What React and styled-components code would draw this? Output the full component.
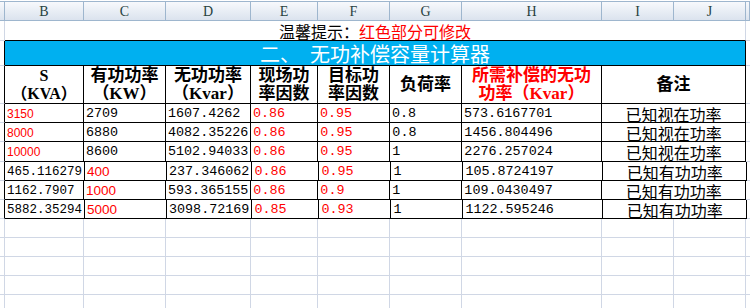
import React from 'react';
import styled, { createGlobalStyle } from 'styled-components';

const GRID = '#d0d7e5';
const INK = '#000';
const RED = '#ff0000';
const CJK = '"Noto Sans CJK SC", "Noto Sans", sans-serif';
const MONO = '"Liberation Mono", "Noto Sans CJK SC", monospace';

const GlobalStyle = createGlobalStyle`
  html, body {
    margin: 0;
    background: #fff;
  }
  body {
    font-family: ${CJK};
    color: #000;
  }
`;

const widths = { gut: 5, B: 79, C: 82, D: 85, E: 67, F: 72, G: 72, H: 140, I: 72, J: 72 };
const letters = ['B', 'C', 'D', 'E', 'F', 'G', 'H', 'I', 'J'];

const Sheet = styled.div`
  width: 750px;
  height: 308px;
  overflow: hidden;
  display: flex;
  flex-direction: column;
`;

const Row = styled.div`
  display: flex;
  flex: none;
  height: ${(p) => p.$h}px;
`;

const HeadBar = styled.div`
  display: flex;
  flex: none;
  height: 21px;
  padding-top: 1px;
  box-sizing: border-box;
  background: #fff;
`;

const HeadCell = styled.div`
  flex: ${(p) => (p.$w ? `0 0 ${p.$w}px` : '1 1 auto')};
  box-sizing: border-box;
  border-top: 1px solid #9eb6ce;
  border-right: 1px solid #9eb6ce;
  border-bottom: 1px solid #9eb6ce;
  background: linear-gradient(#f7f9fc, #dbe3ee);
  display: flex;
  align-items: center;
  justify-content: center;
  font-family: "Liberation Serif", serif;
  font-size: 14px;
  line-height: 16px;
  color: #27413e;
  padding-top: 1px;
`;

const Cell = styled.div`
  flex: ${(p) => (p.$w ? `0 0 ${p.$w}px` : '1 1 auto')};
  box-sizing: border-box;
  white-space: nowrap;
  border-right: 1px solid ${(p) => p.$right || GRID};
  border-bottom: 1px solid ${(p) => p.$bottom || GRID};
  background: ${(p) => p.$bg || 'transparent'};
  display: flex;
  align-items: center;
  justify-content: ${(p) => (p.$center ? 'center' : 'flex-start')};
  padding: 0 ${(p) => (p.$center ? 0 : 2)}px;
  padding-top: 1px;
`;

const Notice = styled.span`
  font-size: 16px;
  line-height: 18px;
  color: ${(p) => (p.$red ? RED : '#000')};
`;

const Title = styled.span`
  font-size: 20px;
  line-height: 22px;
  color: #fff;
`;

const TitleNum = styled.span`
  margin-right: 10px;
`;

const HeadText = styled.div`
  display: flex;
  flex-direction: column;
  align-items: center;
  font-family: "Liberation Serif", ${CJK};
  font-weight: 700;
  font-size: ${(p) => p.$size || 17}px;
  line-height: 18px;
  color: ${(p) => (p.$red ? RED : '#000')};
  padding-bottom: 1px;
`;

const Num = styled.span`
  font-family: ${(p) => (p.$sans ? '"Liberation Sans", sans-serif' : MONO)};
  font-size: ${(p) => p.$size || 13.4}px;
  line-height: 16px;
  color: ${(p) => (p.$red ? RED : '#000')};
`;

const Note = styled.span`
  font-size: 16px;
  line-height: 16px;
`;

const data = [
  { b: '3150', bRed: true, c: '2709', d: '1607.4262', e: '0.86', f: '0.95', g: '0.8', h: '573.6167701', note: '已知视在功率', hgt: 19 },
  { b: '8000', bRed: true, c: '6880', d: '4082.35226', e: '0.86', f: '0.95', g: '0.8', h: '1456.804496', note: '已知视在功率', hgt: 19 },
  { b: '10000', bRed: true, c: '8600', d: '5102.94033', e: '0.86', f: '0.95', g: '1', h: '2276.257024', note: '已知视在功率', hgt: 20 },
  { b: '465.116279', cRed: true, c: '400', d: '237.346062', e: '0.86', f: '0.95', g: '1', h: '105.8724197', note: '已知有功功率', hgt: 19 },
  { b: '1162.7907', cRed: true, c: '1000', d: '593.365155', e: '0.86', f: '0.9', g: '1', h: '109.0430497', note: '已知有功功率', hgt: 19 },
  { b: '5882.35294', cRed: true, c: '5000', d: '3098.72169', e: '0.85', f: '0.93', g: '1', h: '1122.595246', note: '已知有功功率', hgt: 19 },
];

const span = (...keys) => keys.reduce((s, k) => s + widths[k], 0);

const TableCell = (props) => <Cell $right={INK} $bottom={INK} {...props} />;

export default function App() {
  return (
    <>
      <GlobalStyle />
      <Sheet>
        <HeadBar>
          <HeadCell $w={widths.gut} />
          {letters.map((l) => (
            <HeadCell key={l} $w={widths[l]}>
              {l}
            </HeadCell>
          ))}
          <HeadCell />
        </HeadBar>

        <Row $h={20}>
          <Cell $w={widths.gut} />
          <Cell $w={span('B', 'C', 'D', 'E', 'F', 'G', 'H', 'I', 'J')} $bottom={INK} $center>
            <Notice>温馨提示：</Notice>
            <Notice $red>红色部分可修改</Notice>
          </Cell>
          <Cell />
        </Row>

        <Row $h={25}>
          <Cell $w={widths.gut} $right={INK} />
          <TableCell $w={span('B', 'C', 'D', 'E', 'F', 'G', 'H', 'I', 'J')} $bg="#00b0f0" $center>
            <Title>
              <TitleNum>二、</TitleNum>无功补偿容量计算器
            </Title>
          </TableCell>
          <Cell />
        </Row>

        <Row $h={38}>
          <Cell $w={widths.gut} $right={INK} />
          <TableCell $w={widths.B} $center>
            <HeadText $size={16}>
              <span>S</span>
              <span>（KVA）</span>
            </HeadText>
          </TableCell>
          <TableCell $w={widths.C} $center>
            <HeadText>
              <span>有功功率</span>
              <span>（KW）</span>
            </HeadText>
          </TableCell>
          <TableCell $w={widths.D} $center>
            <HeadText>
              <span>无功功率</span>
              <span>（Kvar）</span>
            </HeadText>
          </TableCell>
          <TableCell $w={widths.E} $center>
            <HeadText>
              <span>现场功</span>
              <span>率因数</span>
            </HeadText>
          </TableCell>
          <TableCell $w={widths.F} $center>
            <HeadText>
              <span>目标功</span>
              <span>率因数</span>
            </HeadText>
          </TableCell>
          <TableCell $w={widths.G} $center>
            <HeadText>
              <span>负荷率</span>
            </HeadText>
          </TableCell>
          <TableCell $w={widths.H} $center>
            <HeadText $red>
              <span>所需补偿的无功</span>
              <span>功率（Kvar）</span>
            </HeadText>
          </TableCell>
          <TableCell $w={span('I', 'J')} $center>
            <HeadText>
              <span>备注</span>
            </HeadText>
          </TableCell>
          <Cell />
        </Row>

        {data.map((r) => (
          <Row key={r.b} $h={r.hgt}>
            <Cell $w={widths.gut} $right={INK} />
            <TableCell $w={widths.B}>
              <Num $red={r.bRed} $sans={r.bRed} $size={r.bRed ? 12 : 12.5}>
                {r.b}
              </Num>
            </TableCell>
            <TableCell $w={widths.C}>
              <Num $red={r.cRed} $sans={r.cRed} $size={r.cRed ? 13.5 : 13.4}>
                {r.c}
              </Num>
            </TableCell>
            <TableCell $w={widths.D}>
              <Num>{r.d}</Num>
            </TableCell>
            <TableCell $w={widths.E}>
              <Num $red>{r.e}</Num>
            </TableCell>
            <TableCell $w={widths.F}>
              <Num $red>{r.f}</Num>
            </TableCell>
            <TableCell $w={widths.G}>
              <Num>{r.g}</Num>
            </TableCell>
            <TableCell $w={widths.H}>
              <Num>{r.h}</Num>
            </TableCell>
            <TableCell $w={span('I', 'J')} $center>
              <Note>{r.note}</Note>
            </TableCell>
            <Cell />
          </Row>
        ))}

        {[0, 1, 2, 3, 4].map((i) => (
          <Row key={i} $h={19}>
            <Cell $w={widths.gut} />
            {letters.map((l) => (
              <Cell key={l} $w={widths[l]} />
            ))}
            <Cell />
          </Row>
        ))}
      </Sheet>
    </>
  );
}
